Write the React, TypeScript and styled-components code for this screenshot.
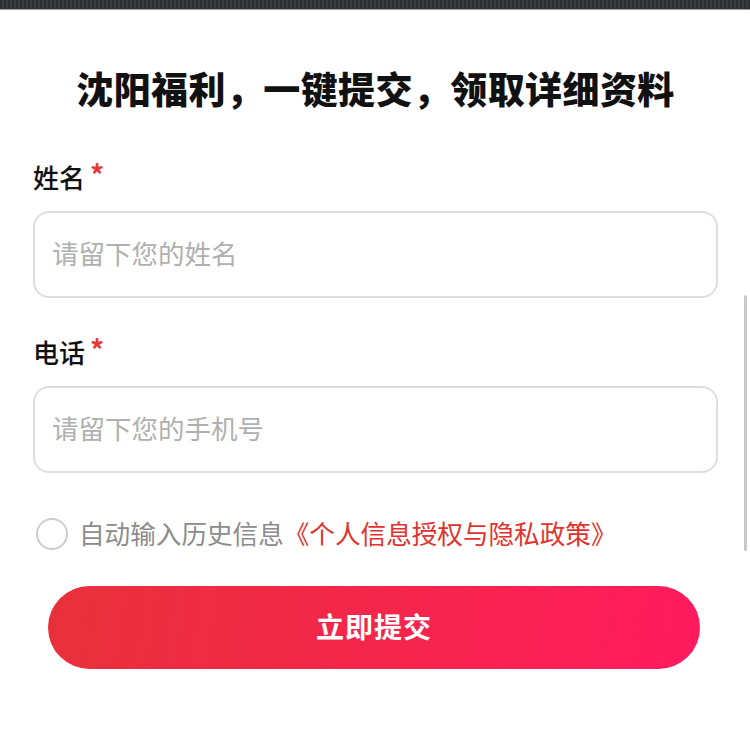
import React, { useState } from "react";
import styled, { createGlobalStyle } from "styled-components";

const GlobalStyle = createGlobalStyle`
  html, body {
    margin: 0;
    padding: 0;
    background: #ffffff;
    font-family: "Noto Sans CJK SC", "Noto Sans", sans-serif;
  }
  * {
    box-sizing: border-box;
  }
`;

const App: React.FC = () => {
  const [checked, setChecked] = useState(false);
  const [name, setName] = useState("");
  const [phone, setPhone] = useState("");

  return (
    <Page>
      <GlobalStyle />
      <TopBar />
      <Form>
        <Title>沈阳福利，一键提交，领取详细资料</Title>
        <Field>
          <Label>
            姓名<Required>*</Required>
          </Label>
          <Input
            placeholder="请留下您的姓名"
            value={name}
            onChange={(e) => setName(e.target.value)}
          />
        </Field>
        <Field>
          <Label>
            电话<Required>*</Required>
          </Label>
          <Input
            placeholder="请留下您的手机号"
            value={phone}
            onChange={(e) => setPhone(e.target.value)}
          />
        </Field>
        <AgreeRow onClick={() => setChecked(!checked)}>
          <Circle checked={checked} />
          <AgreeText>自动输入历史信息</AgreeText>
          <Policy>《个人信息授权与隐私政策》</Policy>
        </AgreeRow>
        <SubmitButton>立即提交</SubmitButton>
      </Form>
      <ScrollThumb />
    </Page>
  );
};

const Page = styled.div`
  position: relative;
  width: 750px;
  height: 734px;
  overflow: hidden;
  background: #fff;
`;

const TopBar = styled.div`
  height: 10px;
  background: repeating-linear-gradient(
    90deg,
    #2c2e32 0px,
    #2c2e32 2px,
    #3a3c40 2px,
    #3a3c40 4px
  );
  border-bottom: 1px solid #9a9da2;
`;

const Form = styled.div`
  display: flex;
  flex-direction: column;
  padding: 0 32px 0 33px;
`;

const Title = styled.h1`
  margin: 53px 0 0;
  font-size: 37px;
  line-height: 50px;
  font-weight: 900;
  color: #111;
  text-align: center;
  letter-spacing: 0.4px;
`;

const Field = styled.div`
  display: flex;
  flex-direction: column;
  gap: 16px;
  margin-top: 45px;

  & + & {
    margin-top: 35px;
  }
`;

const Label = styled.div`
  font-size: 26px;
  line-height: 36px;
  font-weight: 500;
  color: #111;
`;

const Required = styled.span`
  color: #e53935;
  font-size: 28px;
  font-weight: 700;
  margin-left: 5px;
  position: relative;
  top: -2px;
`;

const Input = styled.input`
  width: 100%;
  height: 87px;
  border: 2px solid #dedede;
  border-radius: 16px;
  padding: 0 17px 4px;
  font-family: "Noto Sans CJK SC", "Noto Sans", sans-serif;
  font-size: 26.5px;
  color: #222;
  outline: none;
  background: #fff;

  &::placeholder {
    color: #b0b0b0;
  }
`;

const AgreeRow = styled.div`
  display: flex;
  align-items: center;
  height: 40px;
  margin-top: 41px;
  cursor: pointer;
`;

const Circle = styled.span<{ checked: boolean }>`
  width: 32px;
  height: 32px;
  border-radius: 50%;
  margin-left: 3px;
  margin-right: 11px;
  border: 2px solid ${(p) => (p.checked ? "#ee2a45" : "#cccccc")};
  background: ${(p) => (p.checked ? "#ee2a45" : "#fff")};
  flex-shrink: 0;
`;

const AgreeText = styled.span`
  font-size: 25.6px;
  color: #8c8c8c;
  margin-top: -4px;
`;

const Policy = styled.span`
  font-size: 25.6px;
  color: #e2322e;
  margin-top: -4px;
`;

const SubmitButton = styled.button`
  align-self: flex-start;
  width: 652px;
  height: 83px;
  margin: 32px 0 0 15px;
  padding: 0 0 4px;
  border: none;
  border-radius: 42px;
  background: linear-gradient(100deg, #e8313a 0%, #f4264b 50%, #ff1a5e 100%);
  color: #fff;
  font-family: "Noto Sans CJK SC", "Noto Sans", sans-serif;
  font-size: 28px;
  font-weight: 700;
  letter-spacing: 1px;
  cursor: pointer;
`;

const ScrollThumb = styled.div`
  position: absolute;
  right: 3px;
  top: 295px;
  width: 3px;
  height: 256px;
  background: #c8c8c8;
  border-radius: 2px;
`;

export default App;
